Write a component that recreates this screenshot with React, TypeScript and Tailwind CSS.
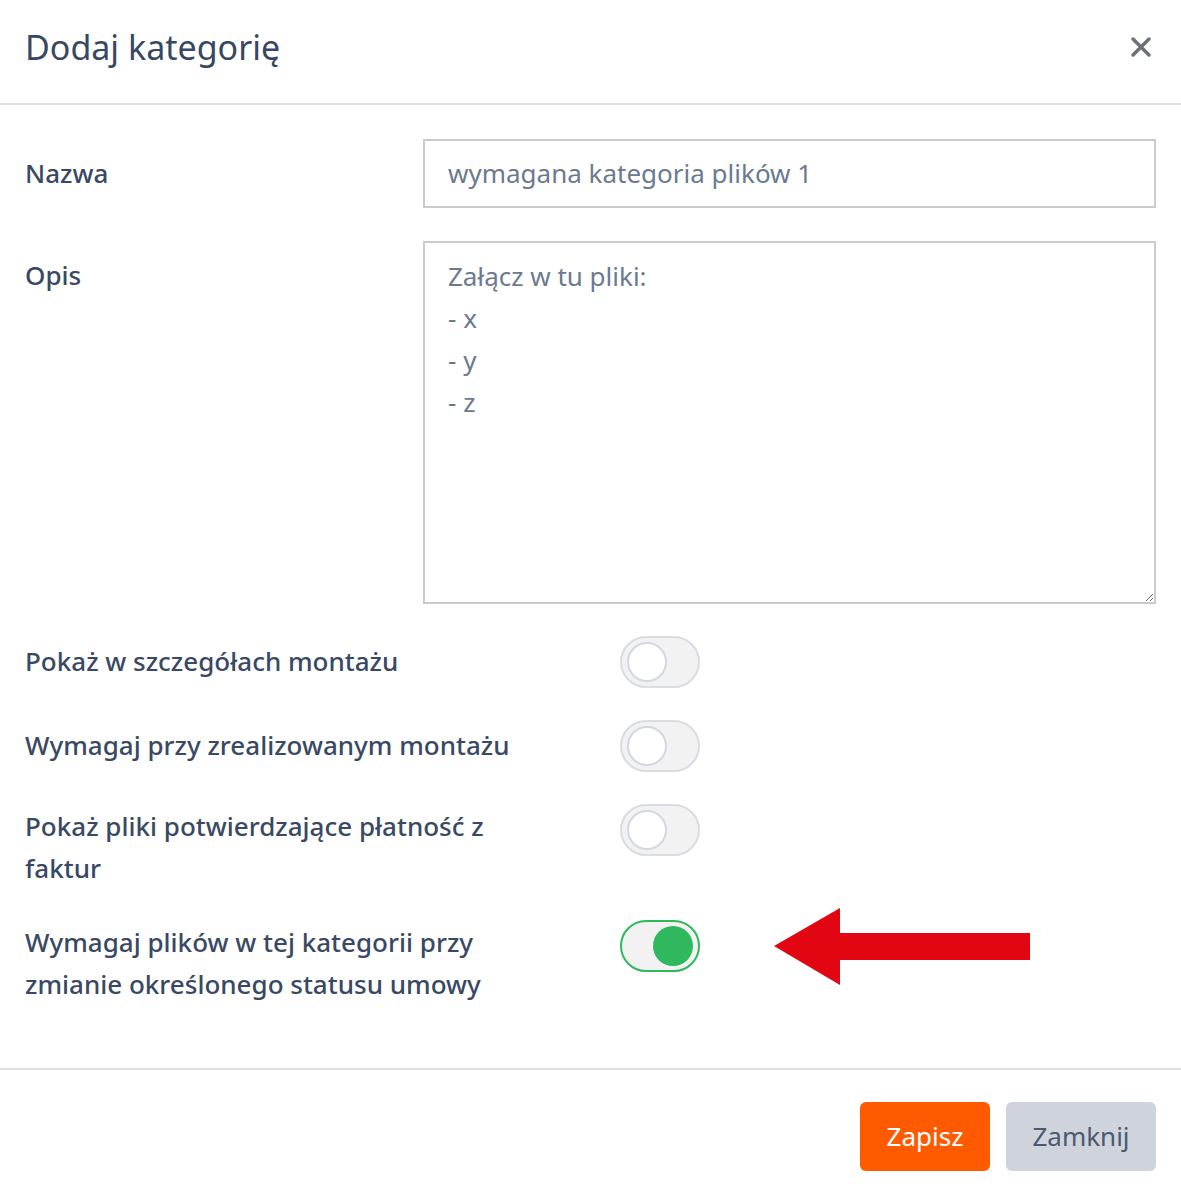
import React from "react";

function Toggle({ on }: { on?: boolean }) {
  if (on) {
    return (
      <div className="flex h-[52px] w-[80px] shrink-0 items-center justify-end rounded-full border-2 border-[#2fb85d] bg-[#f2f2f2] pr-[5px]">
        <div className="h-[40px] w-[40px] rounded-full bg-[#2fb85d]" />
      </div>
    );
  }
  return (
    <div className="flex h-[52px] w-[80px] shrink-0 items-center rounded-full border-2 border-[#d9dce1] bg-[#f2f2f2] pl-[5px]">
      <div className="h-[40px] w-[40px] rounded-full border-2 border-[#d4d8de] bg-white" />
    </div>
  );
}

export default function App() {
  const rows = [
    { label: "Pokaż w szczegółach montażu", on: false, row: "", text: "pt-[4px]" },
    { label: "Wymagaj przy zrealizowanym montażu", on: false, row: "mt-[32px]", text: "pt-[4px]" },
    { label: "Pokaż pliki potwierdzające płatność z faktur", on: false, row: "mt-[32px]", text: "pt-[1px]" },
    {
      label: "Wymagaj plików w tej kategorii przy zmianie określonego statusu umowy",
      on: true,
      row: "mt-[31px]",
      text: "pt-[1px]",
    },
  ];

  return (
    <div className="h-[1194px] w-[1181px] bg-white font-['Noto_Sans',sans-serif] text-[#3a4963]">
      {/* Header */}
      <div className="flex h-[105px] items-center justify-between border-b-2 border-[#dcdfe3] px-[25px] pb-[10px]">
        <h2 className="text-[34px] leading-none text-[#384862]">Dodaj kategorię</h2>
        <button className="flex h-[30px] w-[30px] items-center justify-center text-[#6d7078]">
          <svg width="22" height="22" viewBox="0 0 22 22">
            <path d="M3 3 L19 19 M19 3 L3 19" stroke="currentColor" strokeWidth="3.5" strokeLinecap="round" />
          </svg>
        </button>
      </div>

      {/* Body */}
      <div className="px-[25px] pt-[34px] pb-[63px]">
        <div className="flex items-center">
          <label className="w-[398px] text-[26px] font-medium">Nazwa</label>
          <div className="flex h-[69px] w-[733px] items-center border-2 border-[#cbcbcb] px-[23px] text-[26px] text-[#6c7a8f]">
            wymagana kategoria plików 1
          </div>
        </div>

        <div className="mt-[33px] flex items-start">
          <label className="w-[398px] pt-[13px] text-[26px] font-medium leading-[42px]">Opis</label>
          <textarea
            readOnly
            value={"Załącz w tu pliki:\n- x\n- y\n- z"}
            className="h-[363px] w-[733px] resize-y border-2 border-[#cbcbcb] px-[23px] py-[12px] text-[26px] leading-[42px] text-[#6c7a8f] outline-none"
          />
        </div>

        <div className="mt-[32px] flex flex-col">
          {rows.map((row, i) => (
            <div key={i} className={`relative flex items-start ${row.row}`}>
              <div className={`w-[595px] pr-[60px] text-[26px] font-medium leading-[42px] ${row.text}`}>{row.label}</div>
              <Toggle on={row.on} />
              {row.on && (
                <svg className="absolute left-[749px] top-[-12px]" width="257" height="78" viewBox="0 0 257 78">
                  <path d="M0 38 L66 0 L66 25 L256 25 L256 52 L66 52 L66 77 Z" fill="#e20613" />
                </svg>
              )}
            </div>
          ))}
        </div>
      </div>

      {/* Footer */}
      <div className="flex justify-end gap-[16px] border-t-2 border-[#dcdfe3] px-[25px] pt-[32px]">
        <button className="h-[69px] w-[130px] rounded-[6px] bg-[#ff5a00] text-[26px] text-white">Zapisz</button>
        <button className="h-[69px] w-[150px] rounded-[6px] bg-[#cfd3db] text-[26px] text-[#4b5a70]">Zamknij</button>
      </div>
    </div>
  );
}
